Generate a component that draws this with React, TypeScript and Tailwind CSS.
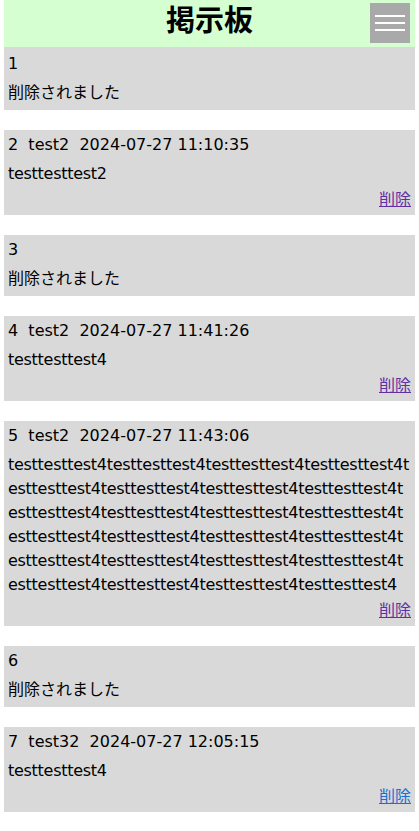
const posts = [
  { id: 1, deleted: true },
  { id: 2, name: "test2", date: "2024-07-27 11:10:35", body: "testtesttest2", visited: true },
  { id: 3, deleted: true },
  { id: 4, name: "test2", date: "2024-07-27 11:41:26", body: "testtesttest4", visited: true },
  { id: 5, name: "test2", date: "2024-07-27 11:43:06", body: "testtesttest4".repeat(24), visited: true },
  { id: 6, deleted: true },
  { id: 7, name: "test32", date: "2024-07-27 12:05:15", body: "testtesttest4", visited: false },
];

const font = { fontFamily: '"DejaVu Sans", "Noto Sans CJK JP", sans-serif' };
const jp = { fontFamily: '"Noto Sans CJK JP", sans-serif' };

export default function App() {
  return (
    <div className="min-h-[831px] bg-white px-1 text-black" style={font}>
      {/* Header */}
      <header className="relative flex h-[47px] items-start justify-center bg-[#d5ffd0]">
        <h1 className="-mt-[3px] text-[29px] font-bold leading-[42px]" style={jp}>
          掲示板
        </h1>
        <button className="absolute right-[5px] top-[3px] flex h-10 w-10 flex-col items-center gap-[5px] bg-[#a9a9a9] pt-3">
          <span className="block h-[2px] w-[30px] bg-white" />
          <span className="block h-[2px] w-[30px] bg-white" />
          <span className="block h-[2px] w-[30px] bg-white" />
        </button>
      </header>

      {/* Posts */}
      <div className="flex flex-col gap-5">
        {posts.map((p, i) => (
          <div
            key={p.id}
            className={`bg-[#d9d9d9] px-1 pb-[5px] text-[16px] leading-6 ${i === 0 ? "pt-[5px]" : "pt-[3px]"}`}
          >
            <div className="mb-[5px] h-6">
              {p.deleted ? p.id : `${p.id}\u00a0\u00a0${p.name}\u00a0\u00a0${p.date}`}
            </div>
            {p.deleted ? (
              <div className="h-6">削除されました</div>
            ) : (
              <>
                <div className="break-all tracking-[-0.28px]">{p.body}</div>
                <div className="flex h-6 justify-end">
                  <a
                    href="#"
                    className={`block leading-6 underline ${p.visited ? "text-[#5f2fa3]" : "text-[#1a6fd0]"}`}
                    style={jp}
                  >
                    削除
                  </a>
                </div>
              </>
            )}
          </div>
        ))}
      </div>
    </div>
  );
}
